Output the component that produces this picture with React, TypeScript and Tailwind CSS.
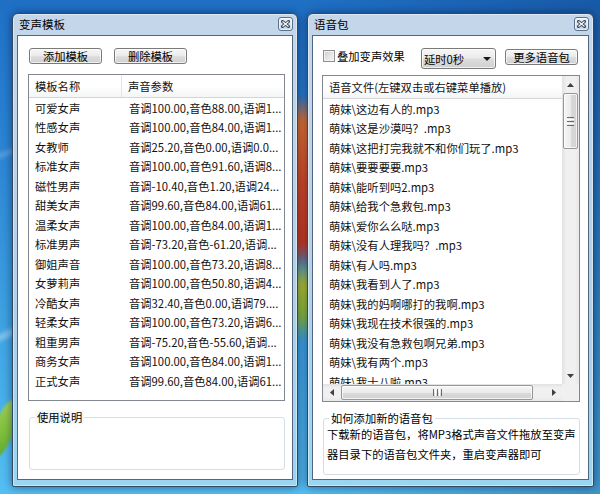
import React from "react";

const leftRows: [string, string][] = [
  ["可爱女声", "音调100.00,音色88.00,语调1..."],
  ["性感女声", "音调100.00,音色84.00,语调1..."],
  ["女教师", "音调25.20,音色0.00,语调0.0..."],
  ["标准女声", "音调100.00,音色91.60,语调8..."],
  ["磁性男声", "音调-10.40,音色1.20,语调24..."],
  ["甜美女声", "音调99.60,音色84.00,语调61..."],
  ["温柔女声", "音调100.00,音色84.00,语调1..."],
  ["标准男声", "音调-73.20,音色-61.20,语调..."],
  ["御姐声音", "音调100.00,音色73.20,语调8..."],
  ["女萝莉声", "音调100.00,音色50.80,语调4..."],
  ["冷酷女声", "音调32.40,音色0.00,语调79...."],
  ["轻柔女声", "音调100.00,音色73.20,语调6..."],
  ["粗重男声", "音调-75.20,音色-55.60,语调..."],
  ["商务女声", "音调100.00,音色84.00,语调1..."],
  ["正式女声", "音调99.60,音色84.00,语调61..."],
];

const files = [
  "这边有人的",
  "这是沙漠吗？",
  "这把打完我就不和你们玩了",
  "要要要要",
  "能听到吗2",
  "给我个急救包",
  "爱你么么哒",
  "没有人理我吗？",
  "有人吗",
  "我看到人了",
  "我的妈啊哪打的我啊",
  "我现在技术很强的",
  "我没有急救包啊兄弟",
  "我有两个",
  "我十八啦",
];

function CloseBtn() {
  return (
    <div className="w-[15px] h-[14px] rounded-[3px] border border-[#5a718c] bg-[linear-gradient(180deg,#eef3f9_0%,#d9e4ef_50%,#c5d4e4_100%)] shadow-[inset_0_0_0_1px_rgba(255,255,255,0.6)] flex items-center justify-center">
      <svg width="9" height="8" viewBox="0 0 9 8">
        <path d="M1.5 1.5 L7.5 6.5 M7.5 1.5 L1.5 6.5" stroke="#3a4a5d" strokeWidth="3" strokeLinecap="square" />
        <path d="M1.5 1.5 L7.5 6.5 M7.5 1.5 L1.5 6.5" stroke="#ffffff" strokeWidth="1.1" />
      </svg>
    </div>
  );
}

function Win({ title, pos, children }: { title: string; pos: string; children: React.ReactNode }) {
  return (
    <div
      className={`absolute ${pos} flex flex-col rounded-t-[6px] rounded-b-[2px] border border-[#34495f] bg-[linear-gradient(180deg,#c4d7ea_0%,#bbd2e8_35%,#acd0ec_70%,#9ad5f2_100%)] px-[4px] pb-[6px] shadow-[0_0_10px_rgba(0,20,60,0.55),inset_0_0_0_1px_rgba(255,255,255,0.45)]`}
    >
      <div className="h-[21px] shrink-0 flex items-start justify-between">
        <span className="pl-[2px] pt-[3px] text-[11.5px] leading-[14px] text-black">{title}</span>
        <div className="mt-[3px]">
          <CloseBtn />
        </div>
      </div>
      <div className="flex-1 min-h-0 flex flex-col bg-white border border-[#52667e]">{children}</div>
    </div>
  );
}

function Btn({ label, cls }: { label: string; cls: string }) {
  return (
    <div
      className={`${cls} h-[16px] rounded-[3px] border border-[#7a7a7a] bg-[linear-gradient(180deg,#f6f6f6_0%,#ececec_45%,#dcdcdc_55%,#d0d0d0_100%)] shadow-[inset_0_0_0_1px_rgba(255,255,255,0.7)] flex items-center justify-center leading-[14px] text-black`}
    >
      {label}
    </div>
  );
}

function TriUp() {
  return (
    <svg width="7" height="4" viewBox="0 0 7 4">
      <path d="M0 4 L3.5 0 L7 4 Z" fill="#404040" />
    </svg>
  );
}
function TriDown() {
  return (
    <svg width="7" height="4" viewBox="0 0 7 4">
      <path d="M0 0 L3.5 4 L7 0 Z" fill="#404040" />
    </svg>
  );
}
function TriLeft() {
  return (
    <svg width="4" height="7" viewBox="0 0 4 7">
      <path d="M4 0 L0 3.5 L4 7 Z" fill="#404040" />
    </svg>
  );
}
function TriRight() {
  return (
    <svg width="4" height="7" viewBox="0 0 4 7">
      <path d="M0 0 L4 3.5 L0 7 Z" fill="#404040" />
    </svg>
  );
}

function VScroll() {
  return (
    <div className="w-[17px] shrink-0 flex flex-col bg-[linear-gradient(90deg,#e2e2e2_0%,#f0f0f0_25%,#f0f0f0_75%,#e8e8e8_100%)]">
      <div className="h-[17px] shrink-0 flex items-center justify-center">
        <TriUp />
      </div>
      <div className="mx-[1px] h-[56px] shrink-0 rounded-[2px] border border-[#979797] bg-[linear-gradient(90deg,#f6f6f6_0%,#eaeaea_50%,#dadada_50%,#d2d2d2_100%)] shadow-[inset_0_0_0_1px_rgba(255,255,255,0.7)] flex flex-col items-center justify-center gap-[1px]">
        <div className="w-[7px] h-[1px] bg-[#6a6a6a]" />
        <div className="w-[7px] h-[1px] bg-[#ffffff]" />
        <div className="w-[7px] h-[1px] bg-[#6a6a6a]" />
        <div className="w-[7px] h-[1px] bg-[#ffffff]" />
        <div className="w-[7px] h-[1px] bg-[#6a6a6a]" />
      </div>
      <div className="flex-1" />
      <div className="h-[17px] shrink-0 flex items-center justify-center">
        <TriDown />
      </div>
    </div>
  );
}

function HScroll() {
  return (
    <div className="flex-1 flex bg-[linear-gradient(180deg,#e2e2e2_0%,#f0f0f0_25%,#f0f0f0_75%,#e8e8e8_100%)]">
      <div className="w-[17px] shrink-0 flex items-center justify-center">
        <TriLeft />
      </div>
      <div className="ml-[1px] my-[1px] w-[192px] shrink-0 rounded-[2px] border border-[#979797] bg-[linear-gradient(180deg,#f6f6f6_0%,#eaeaea_50%,#dadada_50%,#d2d2d2_100%)] shadow-[inset_0_0_0_1px_rgba(255,255,255,0.7)] flex items-center justify-center gap-[1px]">
        <div className="w-[1px] h-[7px] bg-[#6a6a6a]" />
        <div className="w-[1px] h-[7px] bg-[#ffffff]" />
        <div className="w-[1px] h-[7px] bg-[#6a6a6a]" />
        <div className="w-[1px] h-[7px] bg-[#ffffff]" />
        <div className="w-[1px] h-[7px] bg-[#6a6a6a]" />
      </div>
      <div className="flex-1" />
      <div className="w-[17px] shrink-0 flex items-center justify-center">
        <TriRight />
      </div>
    </div>
  );
}

export default function App() {
  return (
    <div className="relative w-[600px] h-[494px] overflow-hidden font-['Microsoft_YaHei','Noto_Sans_CJK_SC',sans-serif] text-[11.3px] text-[#111] bg-[linear-gradient(180deg,#1f70c5_0%,#2981d2_25%,#389ade_55%,#4ab3ec_85%,#55bff2_100%)]">
      {/* desktop wallpaper details */}
      <div className="absolute inset-0 bg-[linear-gradient(90deg,rgba(0,0,0,0)_0%,rgba(0,0,0,0)_50%,rgba(0,25,80,0.25)_100%)]" />
      <div className="absolute left-[-20px] top-[330px] w-[60px] h-[6px] rotate-[-25deg] bg-[rgba(255,255,255,0.35)] blur-[2px]" />
      <div className="absolute left-[-20px] top-[150px] w-[60px] h-[4px] rotate-[-20deg] bg-[rgba(255,255,255,0.25)] blur-[2px]" />
      <div className="absolute left-[290px] top-[95px] w-[24px] h-[175px] blur-[3px] bg-[linear-gradient(180deg,rgba(230,120,40,0)_0%,#e8742c_15%,#dc4a22_50%,#cf3a1c_85%,rgba(200,60,30,0)_100%)]" />
      <div className="absolute left-[290px] top-[260px] w-[24px] h-[80px] blur-[3px] bg-[linear-gradient(180deg,rgba(200,200,40,0)_0%,#b9c42e_30%,#8bbd3a_70%,rgba(120,190,60,0)_100%)]" />
      <div className="absolute left-[-6px] top-[398px] w-[20px] h-[62px] rotate-[20deg] rounded-[50%] blur-[1px] bg-[linear-gradient(180deg,#a5d35a_0%,#7cbf3a_60%,#5aa52e_100%)]" />

      <Win title="变声模板" pos="left-[12px] top-[13px] w-[286px] h-[474px]">
        <div className="mt-[12px] ml-[11px] flex gap-[12px]">
          <Btn label="添加模板" cls="w-[73px]" />
          <Btn label="删除模板" cls="w-[73px]" />
        </div>
        <div className="ml-[10px] mt-[10px] w-[257px] h-[327px] shrink-0 border border-[#828790] bg-white flex flex-col overflow-hidden">
          <div className="h-[23px] shrink-0 flex border-b border-[#d5d5d5] bg-[linear-gradient(180deg,#ffffff_0%,#ffffff_50%,#f4f5f7_100%)]">
            <div className="w-[93px] pl-[6px] flex items-center border-r border-[#e3e4e6]">模板名称</div>
            <div className="flex-1 pl-[6px] flex items-center">声音参数</div>
          </div>
          {leftRows.map((r, i) => (
            <div key={i} className="h-[19.5px] shrink-0 flex items-center leading-[14px]">
              <div className="w-[93px] pl-[6px] whitespace-nowrap">{r[0]}</div>
              <div className="flex-1 pl-[7px] pr-[2px] whitespace-nowrap overflow-hidden">{r[1]}</div>
            </div>
          ))}
        </div>
        <fieldset className="ml-[11px] mt-[9px] w-[256px] h-[60px] border border-[#d3dee6] rounded-[3px]">
          <legend className="ml-[5px] px-[2px] leading-[14px] bg-[#f7f7f7] text-black">使用说明</legend>
        </fieldset>
      </Win>

      <Win title="语音包" pos="left-[307px] top-[13px] w-[287px] h-[474px]">
        <div className="mt-[12px] h-[21px] shrink-0 flex items-start">
          <div className="ml-[10px] mt-[2px] w-[12px] h-[12px] border border-[#8e8f8f] bg-[linear-gradient(135deg,#cbcbcb_0%,#e6e6e6_55%,#f7f7f7_100%)] shadow-[inset_0_0_0_1px_#f2f2f2]" />
          <span className="ml-[2px] w-[84px] leading-[16px] text-black whitespace-nowrap">叠加变声效果</span>
          <div className="w-[75px] h-[21px] rounded-[3px] border border-[#7a7a7a] bg-[linear-gradient(180deg,#f6f6f6_0%,#ececec_45%,#dcdcdc_55%,#d0d0d0_100%)] shadow-[inset_0_0_0_1px_rgba(255,255,255,0.7)] flex items-center justify-between pl-[2px] pr-[4px] text-black">
            <span className="leading-[14px]">延时0秒</span>
            <svg width="8" height="4" viewBox="0 0 8 4">
              <path d="M0 0 L4 4 L8 0 Z" fill="#1a1a1a" />
            </svg>
          </div>
          <Btn label="更多语音包" cls="ml-[9px] mt-[1px] w-[73px]" />
        </div>
        <div className="ml-[9px] mt-[6px] w-[258px] h-[327px] shrink-0 border border-[#828790] bg-white flex flex-col">
          <div className="flex-1 min-h-0 flex">
            <div className="flex-1 min-w-0 overflow-hidden flex flex-col">
              <div className="h-[23px] shrink-0 border-b border-[#d5d5d5] pl-[6px] flex items-center whitespace-nowrap bg-[linear-gradient(180deg,#ffffff_0%,#ffffff_50%,#f4f5f7_100%)]">
                语音文件(左键双击或右键菜单播放)
              </div>
              {files.map((f, i) => (
                <div key={i} className="h-[19.5px] shrink-0 pl-[6px] flex items-center whitespace-nowrap leading-[14px]">
                  萌妹\{f}.mp3
                </div>
              ))}
            </div>
            <VScroll />
          </div>
          <div className="h-[17px] shrink-0 flex">
            <HScroll />
            <div className="w-[17px] bg-[#f0f0f0]" />
          </div>
        </div>
        <fieldset className="ml-[10px] mt-[9px] w-[257px] h-[64px] border border-[#d3dee6] rounded-[3px]">
          <legend className="ml-[5px] px-[2px] leading-[14px] bg-white text-black">如何添加新的语音包</legend>
          <div className="pl-[3px] leading-[19.5px] text-black whitespace-nowrap">
            下载新的语音包，将MP3格式声音文件拖放至变声
            <br />
            器目录下的语音包文件夹，重启变声器即可
          </div>
        </fieldset>
      </Win>
    </div>
  );
}
